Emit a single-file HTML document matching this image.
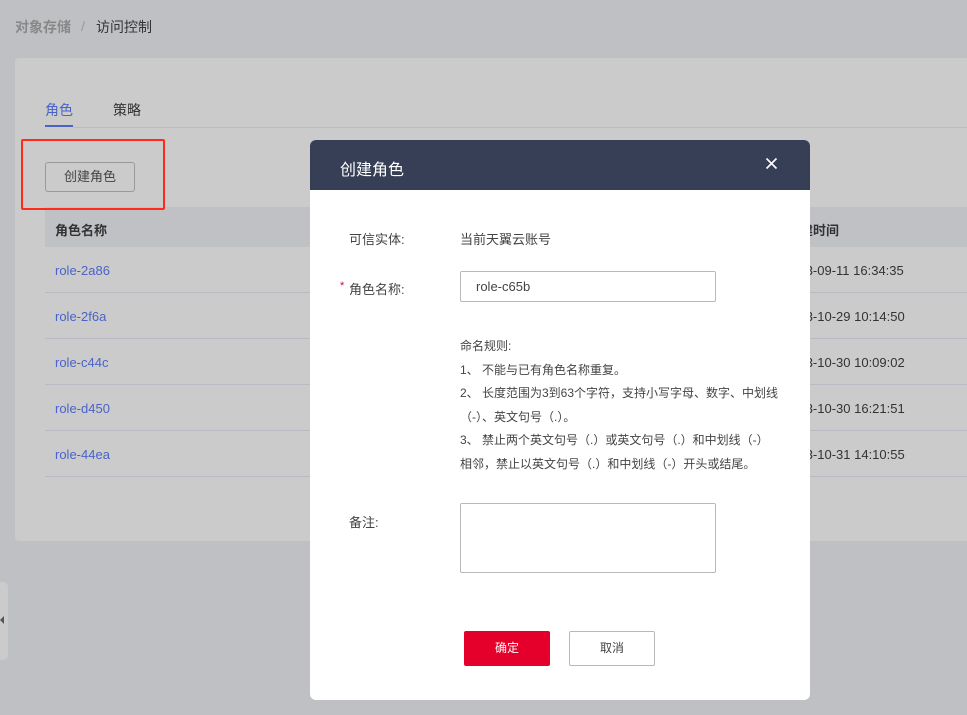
<!DOCTYPE html>
<html><head><meta charset="utf-8"><style>
*{margin:0;padding:0;box-sizing:border-box}
body{width:967px;height:715px;overflow:hidden;background:#bfc0c4;font-family:"Liberation Sans","Noto Sans CJK SC",sans-serif;position:relative;font-size:13px;color:#333}
.a{position:absolute;white-space:nowrap}
.card{position:absolute;left:15px;top:58px;width:960px;height:483px;background:#cbcbcb;border-radius:4px}
.row{position:absolute;left:45px;width:930px;height:46px;border-bottom:1px solid #b9bbc2}
.link{color:#4a63c8}
.lbl{color:#444}
</style></head><body>
<div class="a" style="left:15px;top:17px;font-size:14px;color:#888;font-weight:bold">对象存储</div>
<div class="a" style="left:81px;top:18px;font-size:14px;color:#999">/</div>
<div class="a" style="left:96px;top:17px;font-size:14px;color:#333">访问控制</div>
<div class="card"></div>
<div class="a" style="left:45px;top:100px;font-size:14px;color:#4a63c8">角色</div>
<div class="a" style="left:45px;top:125px;width:28px;height:2px;background:#4a63c8"></div>
<div class="a" style="left:113px;top:100px;font-size:14px;color:#333">策略</div>
<div class="a" style="left:73px;top:127px;width:902px;height:1px;background:#b9bbc2"></div>
<div class="a" style="left:45px;top:162px;width:90px;height:30px;border:1px solid #999;border-radius:3px;text-align:center;line-height:28px;color:#444">创建角色</div>
<div class="a" style="left:45px;top:207px;width:930px;height:40px;background:#c0c1c5"></div>
<div class="a" style="left:21px;top:139px;width:144px;height:71px;border:2px solid #ff2a1a;border-radius:2px"></div>
<div class="a" style="left:55px;top:220px;font-weight:bold;color:#333">角色名称</div>
<div class="a" style="left:787px;top:220px;font-weight:bold;color:#333">创建时间</div>
<div class="row" style="top:247px"></div><div class="row" style="top:293px"></div><div class="row" style="top:339px"></div><div class="row" style="top:385px"></div><div class="row" style="top:431px"></div>
<div class="a link" style="left:55px;top:263px">role-2a86</div>
<div class="a link" style="left:55px;top:309px">role-2f6a</div>
<div class="a link" style="left:55px;top:355px">role-c44c</div>
<div class="a link" style="left:55px;top:401px">role-d450</div>
<div class="a link" style="left:55px;top:447px">role-44ea</div>
<div class="a" style="left:784px;top:263px">2023-09-11 16:34:35</div>
<div class="a" style="left:784px;top:309px">2023-10-29 10:14:50</div>
<div class="a" style="left:784px;top:355px">2023-10-30 10:09:02</div>
<div class="a" style="left:784px;top:401px">2023-10-30 16:21:51</div>
<div class="a" style="left:784px;top:447px">2023-10-31 14:10:55</div>
<div class="a" style="left:-5px;top:582px;width:13px;height:78px;background:#cbcbcb;border-radius:5px"></div>
<div class="a" style="left:0;top:616px;width:0;height:0;border-top:4px solid transparent;border-bottom:4px solid transparent;border-right:4px solid #555"></div>
<div class="a" style="left:310px;top:140px;width:500px;height:560px;background:#fff;border-radius:6px;overflow:hidden">
<div style="height:50px;background:#373f57"></div>
</div>
<div class="a" style="left:340px;top:156px;font-size:16px;color:#fff">创建角色</div>
<svg class="a" style="left:765px;top:157px" width="13" height="13" viewBox="0 0 13 13"><path d="M1.5 1.5L11.5 11.5M11.5 1.5L1.5 11.5" stroke="#fff" stroke-width="1.6"/></svg>
<div class="a lbl" style="left:349px;top:229px">可信实体:</div>
<div class="a lbl" style="left:460px;top:229px">当前天翼云账号</div>
<div class="a" style="left:340px;top:280px;color:#e4002b;font-size:11px">*</div>
<div class="a lbl" style="left:349px;top:279px">角色名称:</div>
<div class="a" style="left:460px;top:271px;width:256px;height:31px;border:1px solid #b8b8b8;border-radius:2px;padding-left:15px;line-height:29px;color:#444">role-c65b</div>
<div class="a" style="left:460px;top:335px;font-size:12px;line-height:23.5px;color:#444;white-space:normal;width:330px">命名规则:<br>1、 不能与已有角色名称重复。<br>2、 长度范围为3到63个字符，支持小写字母、数字、中划线<br>（-）、英文句号（.）。<br>3、 禁止两个英文句号（.）或英文句号（.）和中划线（-）<br>相邻，禁止以英文句号（.）和中划线（-）开头或结尾。</div>
<div class="a lbl" style="left:349px;top:512px">备注:</div>
<div class="a" style="left:460px;top:503px;width:256px;height:70px;border:1px solid #b8b8b8;border-radius:2px"></div>
<div class="a" style="left:464px;top:631px;width:86px;height:35px;background:#e4002b;border-radius:2px;color:#fff;text-align:center;line-height:35px;font-size:12px">确定</div>
<div class="a" style="left:569px;top:631px;width:86px;height:35px;border:1px solid #b8b8b8;border-radius:2px;color:#444;text-align:center;line-height:33px;font-size:12px">取消</div>
</body></html>
